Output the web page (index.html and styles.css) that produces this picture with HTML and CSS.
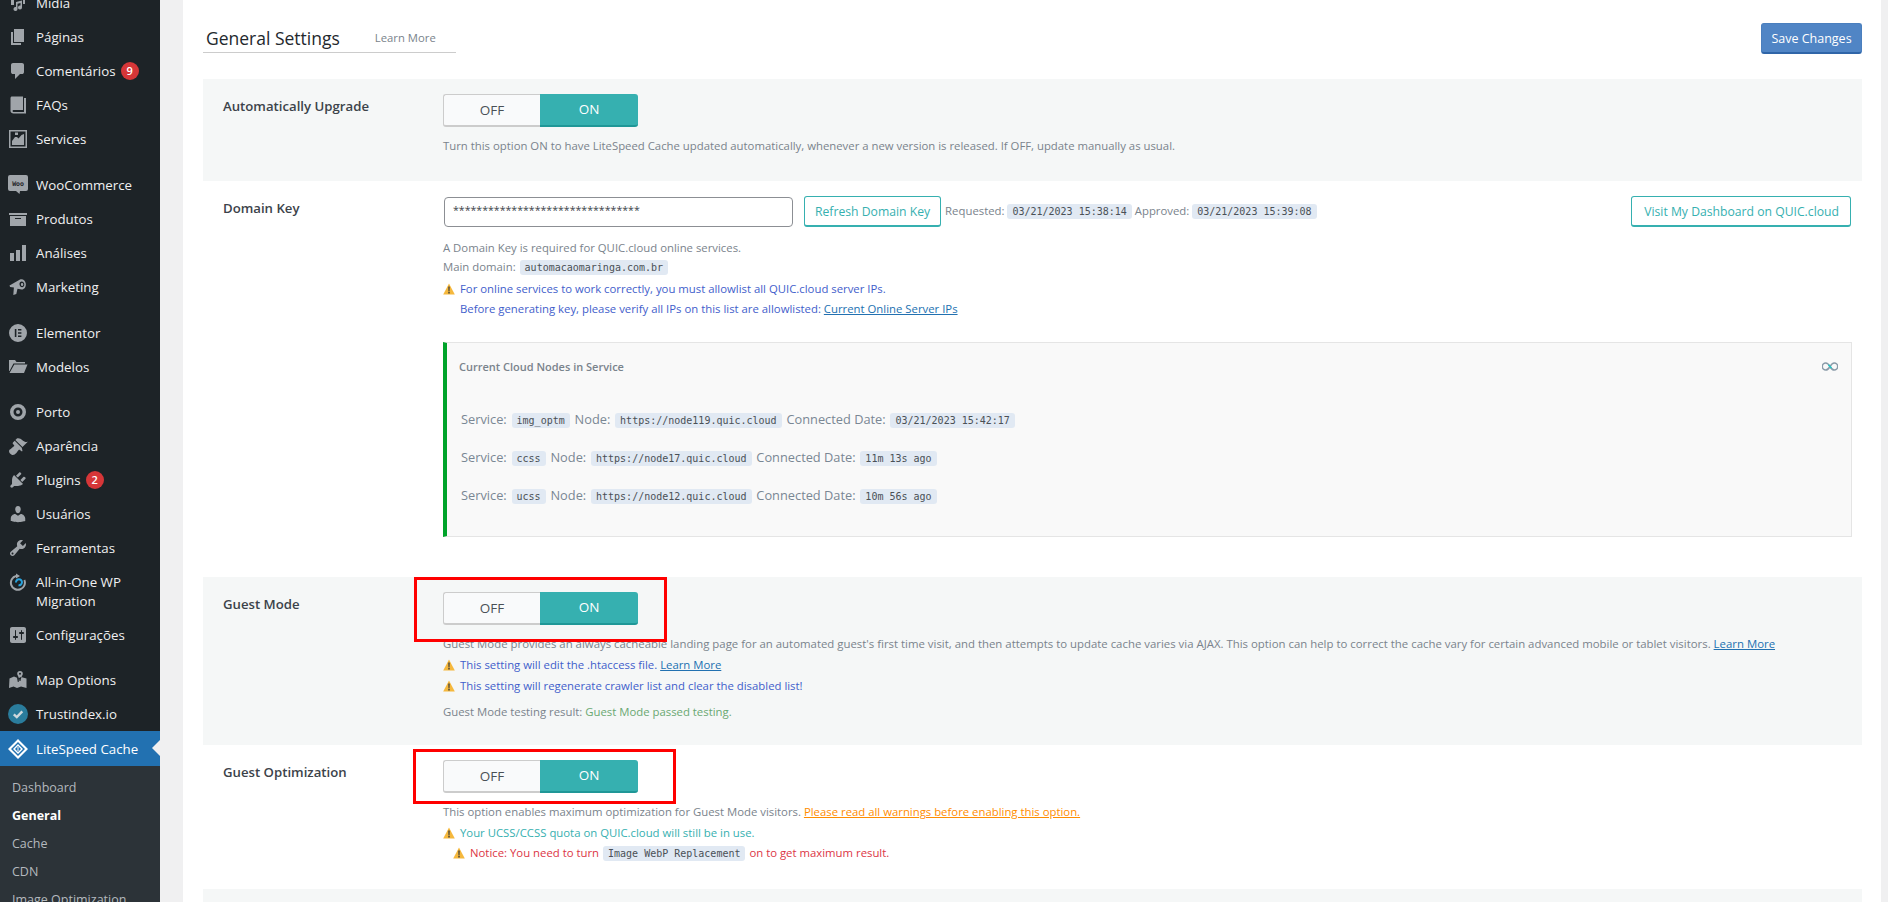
FILE: index.html
```html
<!DOCTYPE html>
<html lang="pt-BR">
<head>
<meta charset="utf-8">
<title>LiteSpeed Cache - General Settings</title>
<link rel="stylesheet" href="styles.css">
</head>
<body>
<svg class="defs" width="0" height="0" aria-hidden="true">
  <symbol id="warn" viewBox="0 0 12 12"><path fill="#f5b83d" d="M6 .6 11.800 11.400H.2z"/><path fill="#3a3a3a" d="M5.300 3.600h1.400l-.2 4.800h-1zM5.300 9.100h1.400v1.300H5.300z"/></symbol>
</svg>
<div class="layout">
  <aside class="sidebar">
    <nav class="menu">
      <a class="item"><svg class="ico" viewBox="0 0 20 20"><path d="M3 3h6v3H6v6H3zM11 3h6v8h-2V5h-4zM8 9l6-1.500v7a2 2 0 1 1-1.500-1.900V10L9.500 10.700V16a2 2 0 1 1-1.500-1.900z"/></svg><span>Mídia</span></a>
      <a class="item"><svg class="ico" viewBox="0 0 20 20"><path d="M6 15V2h10v13H6zm-1 1h8v2H3V5h2v11z"/></svg><span>Páginas</span></a>
      <a class="item"><svg class="ico" viewBox="0 0 20 20"><path d="M5 2h9q.82 0 1.410.59T16 4v7q0 .82-.59 1.410T14 13h-2l-5 5v-5H5q-.82 0-1.410-.59T3 11V4q0-.82.59-1.410T5 2z"/></svg><span>Comentários</span><b class="badge">9</b></a>
      <a class="item"><svg class="ico" viewBox="0 0 20 20"><path d="M4 1.500h11V15H6c-1 0-1.500.5-1.500 1s.5 1 1.500 1h10V3h2v15.500H5.500C4 18.500 2.500 17.500 2.500 16V3C2.500 2.200 3.200 1.500 4 1.500z"/></svg><span>FAQs</span></a>
      <a class="item"><svg class="ico" viewBox="0 0 20 20"><path fill-rule="evenodd" d="M1 1h18v18H1zM2.500 2.500v15h15v-15zM4 12l3-4h2l1.500 1.500L13.500 6l2.500-1v11H4zM7 3.500h3v2.500H7z"/></svg><span>Services</span></a>
      <div class="sep wide"></div>
      <a class="item"><svg class="ico" viewBox="0 0 20 20"><path d="M2 0h16a2 2 0 0 1 2 2v12a2 2 0 0 1-2 2h-6l-.5 3-3.500-3H2a2 2 0 0 1-2-2V2a2 2 0 0 1 2-2z"/><text class="woo" x="10" y="10.500" text-anchor="middle">Woo</text></svg><span>WooCommerce</span></a>
      <a class="item"><svg class="ico" viewBox="0 0 20 20"><path d="M19 4v2H1V4h18zM2 7h16v10H2V7zm11 3V9H7v1h6z"/></svg><span>Produtos</span></a>
      <a class="item"><svg class="ico" viewBox="0 0 20 20"><path d="M18 18V2h-4v16h4zm-6 0V7H8v11h4zm-6 0v-8H2v8h4z"/></svg><span>Análises</span></a>
      <a class="item"><svg class="ico" viewBox="0 0 20 20"><path fill-rule="evenodd" d="M1.500 8.500 12 2.500c2.500-1.200 5.500 1 5.800 4.300.3 3.400-1.700 6-4.300 5.800l-4-.8-1.200 5.200-3 1 .6-7.500-3.800-.5zM13.800 4.500c-1.500 0-2.500 1.300-2.300 3 .2 1.700 1.500 3 2.800 2.800 1.400-.2 2.200-1.500 2-3.200-.2-1.500-1.300-2.600-2.500-2.600zM14 6c.8 0 1.300.7 1.300 1.500S14.800 9 14.100 9s-1.200-.6-1.200-1.500S13.300 6 14 6z"/></svg><span>Marketing</span></a>
      <div class="sep wide"></div>
      <a class="item"><svg class="ico" viewBox="0 0 20 20"><path fill-rule="evenodd" d="M10 1a9 9 0 1 1 0 18 9 9 0 0 1 0-18zM6.800 6v8h1.600V6zm3.200 0v1.600h3.400V6zm0 3.200v1.600h3.400V9.200zm0 3.200V14h3.400v-1.600z"/></svg><span>Elementor</span></a>
      <a class="item"><svg class="ico" viewBox="0 0 20 20"><path d="M1 3h6l1.500 2H17v1.500H5.500L1.500 14H1zM6.300 7.500H19.500L16 16H1.500z"/></svg><span>Modelos</span></a>
      <div class="sep"></div>
      <a class="item"><svg class="ico" viewBox="0 0 20 20"><path fill-rule="evenodd" d="M10 2a8 8 0 1 1 0 16 8 8 0 0 1 0-16zm0 3.500a4.500 4.500 0 1 0 0 9 4.500 4.500 0 0 0 0-9zM10 8a2 2 0 1 1 0 4 2 2 0 0 1 0-4z"/></svg><span>Porto</span></a>
      <a class="item"><svg class="ico" viewBox="0 0 20 20"><path d="M14.480 11.060L7.410 3.990l1.500-1.500c.5-.56 2.300-.47 3.510.32 1.210.8 1.430 1.280 2.910 2.100 1.180.64 2.450 1.260 4.450.85zm-.71.71L6.700 4.700 4.930 6.470c-.39.39-.39 1.020 0 1.410l1.060 1.060c.39.39.39 1.030 0 1.420-.6.6-1.430 1.110-2.210 1.690-.35.26-.7.53-1.010.84C1.430 13.230 0 15.290 2.340 17.630s4.400.91 5.750-.44c.31-.31.58-.66.84-1.010.58-.78 1.090-1.610 1.690-2.210.39-.39 1.020-.39 1.410 0l1.060 1.060c.39.39 1.020.39 1.410 0z"/></svg><span>Aparência</span></a>
      <a class="item"><svg class="ico" viewBox="0 0 20 20"><path d="M13.110 4.360L9.870 7.600 8 5.730l3.240-3.240c.35-.34 1.050-.2 1.560.32.52.51.66 1.210.31 1.550zm-8 1.770l.91-1.120 9.010 9.010-1.190.84c-.71.71-2.630 1.160-3.820 1.160H6.140L4.900 17.260c-.59.59-1.540.59-2.120 0-.59-.58-.59-1.530 0-2.120l1.240-1.240v-3.880c0-1.130.4-3.190 1.090-3.890zm7.260 3.970l3.240-3.240c.34-.35 1.040-.21 1.550.31.52.51.66 1.210.31 1.550l-3.240 3.250z"/></svg><span>Plugins</span><b class="badge">2</b></a>
      <a class="item"><svg class="ico" viewBox="0 0 20 20"><path d="M10 9.250c-2.270 0-2.730-3.440-2.730-3.440C7 4.020 7.820 2 9.970 2c2.160 0 2.980 2.020 2.710 3.810 0 0-.41 3.440-2.680 3.440zm0 2.570L12.720 10c2.390 0 4.520 2.330 4.520 4.530v2.490s-3.650 1.130-7.240 1.130c-3.650 0-7.240-1.130-7.240-1.130v-2.490c0-2.250 1.940-4.480 4.470-4.480z"/></svg><span>Usuários</span></a>
      <a class="item"><svg class="ico" viewBox="0 0 20 20"><path d="M16.680 9.770c-1.340 1.340-3.300 1.670-4.950.99l-5.410 6.520c-.99.99-2.590.99-3.580 0s-.99-2.590 0-3.570l6.520-5.420c-.68-1.650-.35-3.610.99-4.950 1.280-1.280 3.120-1.620 4.720-1.060l-2.890 2.890 2.820 2.820 2.860-2.870c.53 1.580.18 3.390-1.080 4.650zM3.810 16.210c.4.39 1.040.39 1.430 0 .4-.4.4-1.040 0-1.430-.39-.4-1.030-.4-1.430 0-.39.39-.39 1.030 0 1.430z"/></svg><span>Ferramentas</span></a>
      <a class="item tall"><svg class="ico" viewBox="0 0 20 20"><path d="M8 1.500l4 2.500-4 2.500V5a6 6 0 1 0 7.500 3.500l1.700-1A8 8 0 1 1 8 3z"/><path fill="none" stroke="#2aa3dc" stroke-width="2" d="M8 10.500a3 3 0 1 1 2.500 2.700"/></svg><span>All-in-One WP Migration</span></a>
      <a class="item"><svg class="ico" viewBox="0 0 20 20"><path d="M18 16V4c0-1.100-.9-2-2-2H4c-1.100 0-2 .9-2 2v12c0 1.100.9 2 2 2h12c1.100 0 2-.9 2-2zM8 11h1c.55 0 1 .45 1 1s-.45 1-1 1H8v1.500c0 .28-.22.5-.5.5s-.5-.22-.5-.5V13H6c-.55 0-1-.45-1-1s.45-1 1-1h1V5.500c0-.28.22-.5.5-.5s.5.22.5.5V11zm5-2h-1c-.55 0-1-.45-1-1s.45-1 1-1h1V5.500c0-.28.22-.5.5-.5s.5.22.5.5V7h1c.55 0 1 .45 1 1s-.45 1-1 1h-1v5.500c0 .28-.22.5-.5.5s-.5-.22-.5-.5V9z"/></svg><span>Configurações</span></a>
      <div class="sep"></div>
      <a class="item"><svg class="ico" viewBox="0 0 20 20"><path fill-rule="evenodd" d="M1.500 8.500 6 6.500l3 1.200.8 4.300h.9L11 8l2-1 5.500 1.500V18l-5.500-1.500-4 1.500-3.500-1.500-4.500 1.500zM12 1a2.800 2.800 0 0 1 2.800 2.800c0 1.500-1.700 3-2.300 7.200h-1C11 6.800 9.200 5.300 9.200 3.800A2.800 2.800 0 0 1 12 1zm0 1.800a1 1 0 1 0 0 2 1 1 0 0 0 0-2z"/></svg><span>Map Options</span></a>
      <a class="item"><svg class="ico ico-ti" viewBox="0 0 20 20"><circle cx="10" cy="10" r="10" fill="#2a7c9c"/><path fill="none" stroke="#cfd8dc" stroke-width="2.400" d="M5.800 10.300l3 2.800 5.500-5.800"/></svg><span>Trustindex.io</span></a>
      <a class="item active"><svg class="ico ico-ls" viewBox="0 0 20 20"><path fill-rule="evenodd" fill="#fff" d="M10 0l10 10-10 10L0 10zM10 3 3 10l7 7 7-7zM10 5l5 5-5 5-5-5z"/><path fill="#2271b1" d="M10 7l3 3-3 3-3-3z"/><path fill="#fff" d="M9.500 8h1v4h-1z"/></svg><span>LiteSpeed Cache</span></a>
      <ul class="submenu">
        <li>Dashboard</li>
        <li class="current">General</li>
        <li>Cache</li>
        <li>CDN</li>
        <li>Image Optimization</li>
      </ul>
    </nav>
  </aside>
  <main class="main">
    <section class="panel">
      <header class="head">
        <div class="title-wrap">
          <h1 class="title">General Settings</h1>
          <a class="title-link">Learn More</a>
        </div>
        <button class="save">Save Changes</button>
      </header>

      <div class="row shaded upgrade">
        <div class="label">Automatically Upgrade</div>
        <div class="body">
          <div class="toggle"><span class="off">OFF</span><span class="on">ON</span></div>
          <p class="help first">Turn this option ON to have LiteSpeed Cache updated automatically, whenever a new version is released. If OFF, update manually as usual.</p>
        </div>
      </div>

      <div class="row domain">
        <div class="label">Domain Key</div>
        <div class="body">
          <div class="key-bar">
            <div class="key-input">********************************</div>
            <button class="outline">Refresh Domain Key</button>
            <span class="meta">Requested: <code>03/21/2023 15:38:14</code> Approved: <code>03/21/2023 15:39:08</code></span>
            <button class="outline push">Visit My Dashboard on QUIC.cloud</button>
          </div>
          <p class="help first2">A Domain Key is required for QUIC.cloud online services.</p>
          <p class="help tight">Main domain: <code>automacaomaringa.com.br</code></p>
          <p class="help blue"><svg class="warn"><use href="#warn"/></svg>For online services to work correctly, you must allowlist all QUIC.cloud server IPs.</p>
          <p class="help blue indent">Before generating key, please verify all IPs on this list are allowlisted: <a class="lnk">Current Online Server IPs</a></p>
          <div class="nodes">
            <div class="nodes-head">
              <span>Current Cloud Nodes in Service</span>
              <svg class="link-ico" viewBox="0 0 16 9"><path fill="none" stroke="#8a9ba8" stroke-width="1.500" d="M8 4.500C6.500 2 5.500 1 3.800 1a3.500 3.500 0 0 0 0 7c1.700 0 2.700-1 4.200-3.500 1.500-2.500 2.500-3.500 4.200-3.500a3.500 3.500 0 0 1 0 7C10.500 8 9.500 7 8 4.500z"/><path fill="none" stroke="#25c6c6" stroke-width="1.500" d="M6.500 2.800 9.500 6.200"/></svg>
            </div>
            <p class="node">Service: <code>img_optm</code> Node: <code>https://node119.quic.cloud</code> Connected Date: <code>03/21/2023 15:42:17</code></p>
            <p class="node">Service: <code>ccss</code> Node: <code>https://node17.quic.cloud</code> Connected Date: <code>11m 13s ago</code></p>
            <p class="node">Service: <code>ucss</code> Node: <code>https://node12.quic.cloud</code> Connected Date: <code>10m 56s ago</code></p>
          </div>
        </div>
      </div>

      <div class="row shaded guest">
        <div class="label">Guest Mode</div>
        <div class="body">
          <div class="toggle"><span class="off">OFF</span><span class="on">ON</span><i class="mark mark-a"></i></div>
          <p class="help first3 long">Guest Mode provides an always cacheable landing page for an automated guest's first time visit, and then attempts to update cache varies via AJAX. This option can help to correct the cache vary for certain advanced mobile or tablet visitors. <a class="lnk">Learn More</a></p>
          <p class="help blue guest-warn"><svg class="warn"><use href="#warn"/></svg>This setting will edit the .htaccess file. <a class="lnk">Learn More</a></p>
          <p class="help blue guest-warn"><svg class="warn"><use href="#warn"/></svg>This setting will regenerate crawler list and clear the disabled list!</p>
          <p class="help result">Guest Mode testing result: <span class="green">Guest Mode passed testing.</span></p>
        </div>
      </div>

      <div class="row guest-opt">
        <div class="label">Guest Optimization</div>
        <div class="body">
          <div class="toggle"><span class="off">OFF</span><span class="on">ON</span><i class="mark mark-b"></i></div>
          <p class="help first3">This option enables maximum optimization for Guest Mode visitors. <a class="lnk orange">Please read all warnings before enabling this option.</a></p>
          <p class="help teal"><svg class="warn"><use href="#warn"/></svg>Your UCSS/CCSS quota on QUIC.cloud will still be in use.</p>
          <p class="help red notice"><svg class="warn"><use href="#warn"/></svg>Notice: You need to turn <code>Image WebP Replacement</code> on to get maximum result.</p>
        </div>
      </div>

      <div class="row shaded last"></div>
    </section>
  </main>
</div>
</body>
</html>
```

FILE: styles.css
```css
* { box-sizing: border-box; }
html, body { margin: 0; height: 902px; overflow: hidden; }
body { font-family: "Open Sans", "Noto Sans", sans-serif; background: #f0f0f1; color: #3c434a; }
.defs { position: absolute; }
.layout { display: flex; height: 902px; overflow: hidden; }

/* sidebar */
.sidebar { width: 160px; flex: none; background: #1d2327; overflow: hidden; }
.menu { margin-top: -14px; }
.item { display: flex; align-items: center; height: 34px; padding-left: 8px; color: #f0f0f1; font-size: 13.3px; line-height: 19px; }
.item span { margin-left: 8px; padding-top: 1px; }
.item.tall { height: 53px; align-items: flex-start; padding-top: 7px; }
.item.tall span { width: 115px; }
.sep { height: 11px; }
.sep.wide { height: 12px; }
.ico { width: 20px; height: 20px; flex: none; fill: #a0a5aa; }
.woo { font: 700 6.5px "DejaVu Sans Mono", monospace; fill: #1d2327; }
.badge { margin-left: 5px; width: 18px; height: 18px; border-radius: 50%; background: #d63638; color: #fff; font-size: 11px; font-weight: 600; line-height: 18px; text-align: center; }
.active { background: #2271b1; height: 35px; color: #fff; position: relative; }
.active::after { content: ""; position: absolute; right: 0; top: 9px; border: 8px solid transparent; border-right-color: #f0f0f1; }
.submenu { list-style: none; margin: 0; padding: 8px 0 0; background: #2c3338; color: #b4b9be; font-size: 12.5px; }
.submenu li { height: 28px; line-height: 28px; padding-left: 12px; white-space: nowrap; }
.submenu .current { color: #fff; font-weight: 700; }

/* panel */
.main { flex: 1; padding: 0 7px 0 23px; min-width: 0; }
.panel { background: #fff; height: 902px; padding: 0 19px 0 20px; overflow: hidden; }
.head { display: flex; justify-content: space-between; align-items: flex-start; height: 79px; padding-top: 23px; }
.title-wrap { display: flex; align-items: center; width: 253px; height: 30px; padding-left: 3px; border-bottom: 1px solid #ccc; }
.title { margin: 0; font-size: 17.5px; font-weight: 500; color: #23282d; line-height: 30px; }
.title-link { margin-left: 35px; font-size: 11.3px; color: #7a838c; }
.save { width: 101px; height: 31px; background: #5085c5; border: 1px solid #4a7fbe; border-bottom: 2px solid #2f65a8; border-radius: 3px; color: #fff; font: 12.5px "Open Sans", sans-serif; padding: 0; }

.row { display: flex; padding: 15px 11px 0 20px; }
.shaded { background: #f5f7f7; }
.upgrade { height: 102px; }
.domain { height: 396px; }
.guest { height: 168px; }
.guest-opt { height: 144px; }
.last { height: 13px; }
.label { width: 220px; flex: none; font-size: 13.2px; font-weight: 600; line-height: 24px; color: #3c434a; }
.body { flex: 1; min-width: 0; }

.toggle { position: relative; display: flex; width: 195px; height: 33px; font-size: 13.5px; line-height: 31px; text-align: center; }
.off { width: 97px; background: #f9fafb; border: 1px solid #ccc; border-bottom-width: 2px; border-right: 0; border-radius: 3px 0 0 3px; color: #4a5056; }
.on { flex: 1; background: #36b0b0; border-bottom: 2px solid #1f9797; border-radius: 0 3px 3px 0; color: #fff; }
.mark { position: absolute; border: 3px solid #f00; pointer-events: none; }
.mark-a { left: -29px; top: -15px; width: 253px; height: 65px; }
.mark-b { left: -30px; top: -11px; width: 263px; height: 55px; }

.help { margin: 0; font-size: 11.35px; line-height: 20px; color: #7a838c; white-space: nowrap; }
.help.long { font-size: 11.4px; }
.first { margin-top: 9px; }
.first2 { margin-top: 11px; }
.first3 { margin-top: 9px; }
.tight { margin-top: -1px; }
.result { margin-top: 6px; }
.blue { color: #3f5ecb; margin-top: 2px; }
.blue.indent { margin-top: 0; padding-left: 17px; }
.guest-warn { margin-top: 1px; }
.teal { color: #36b0b0; margin-top: 1px; }
.red { color: #dc3545; }
.green { color: #6aa872; }
.notice { padding-left: 10px; }
.lnk { color: #2271b1; text-decoration: underline; }
.orange { color: #ff8c00; }
.warn { width: 12px; height: 12px; margin-right: 5px; vertical-align: -2px; }
code { font: 10px/18px "DejaVu Sans Mono", "Liberation Mono", monospace; background: #e1e9f3; color: #4a5056; border-radius: 3px; padding: 2px 5px; margin: 0 1px; }

.key-bar { display: flex; align-items: center; height: 31px; }
.key-input { width: 349px; height: 30px; margin-left: 1px; padding-left: 8px; border: 1px solid #8c8f94; border-radius: 4px; background: #fff; font-size: 10.6px; line-height: 24px; color: #3c434a; }
.outline { height: 31px; margin-left: 11px; padding: 0 10px; background: #fff; border: 1px solid #36b0b0; border-bottom-width: 2px; border-radius: 3px; color: #36b0b0; font: 12.2px "Open Sans", sans-serif; white-space: nowrap; }
.meta { margin-left: 4px; font-size: 11.35px; color: #7a838c; white-space: nowrap; }
.meta code { margin: 0; }
.outline.push { margin-left: auto; padding: 0 11px 0 12px; }

.nodes { width: 1409px; height: 195px; margin-top: 23px; background: #f9f9f9; border: 1px solid #e5e5e5; border-left: 4px solid #00a32a; padding: 0 0 0 12px; }
.nodes-head { display: flex; justify-content: space-between; align-items: center; height: 47px; padding-right: 13px; font-size: 11px; font-weight: 600; color: #7a838c; }
.link-ico { width: 16px; height: 9px; }
.node { margin: 0 0 17px 2px; font-size: 12.8px; line-height: 20px; color: #7a8794; white-space: nowrap; }
.node code { margin: 0 1.5px; }
.nodes-head + .node { margin-top: 19px; }
```
